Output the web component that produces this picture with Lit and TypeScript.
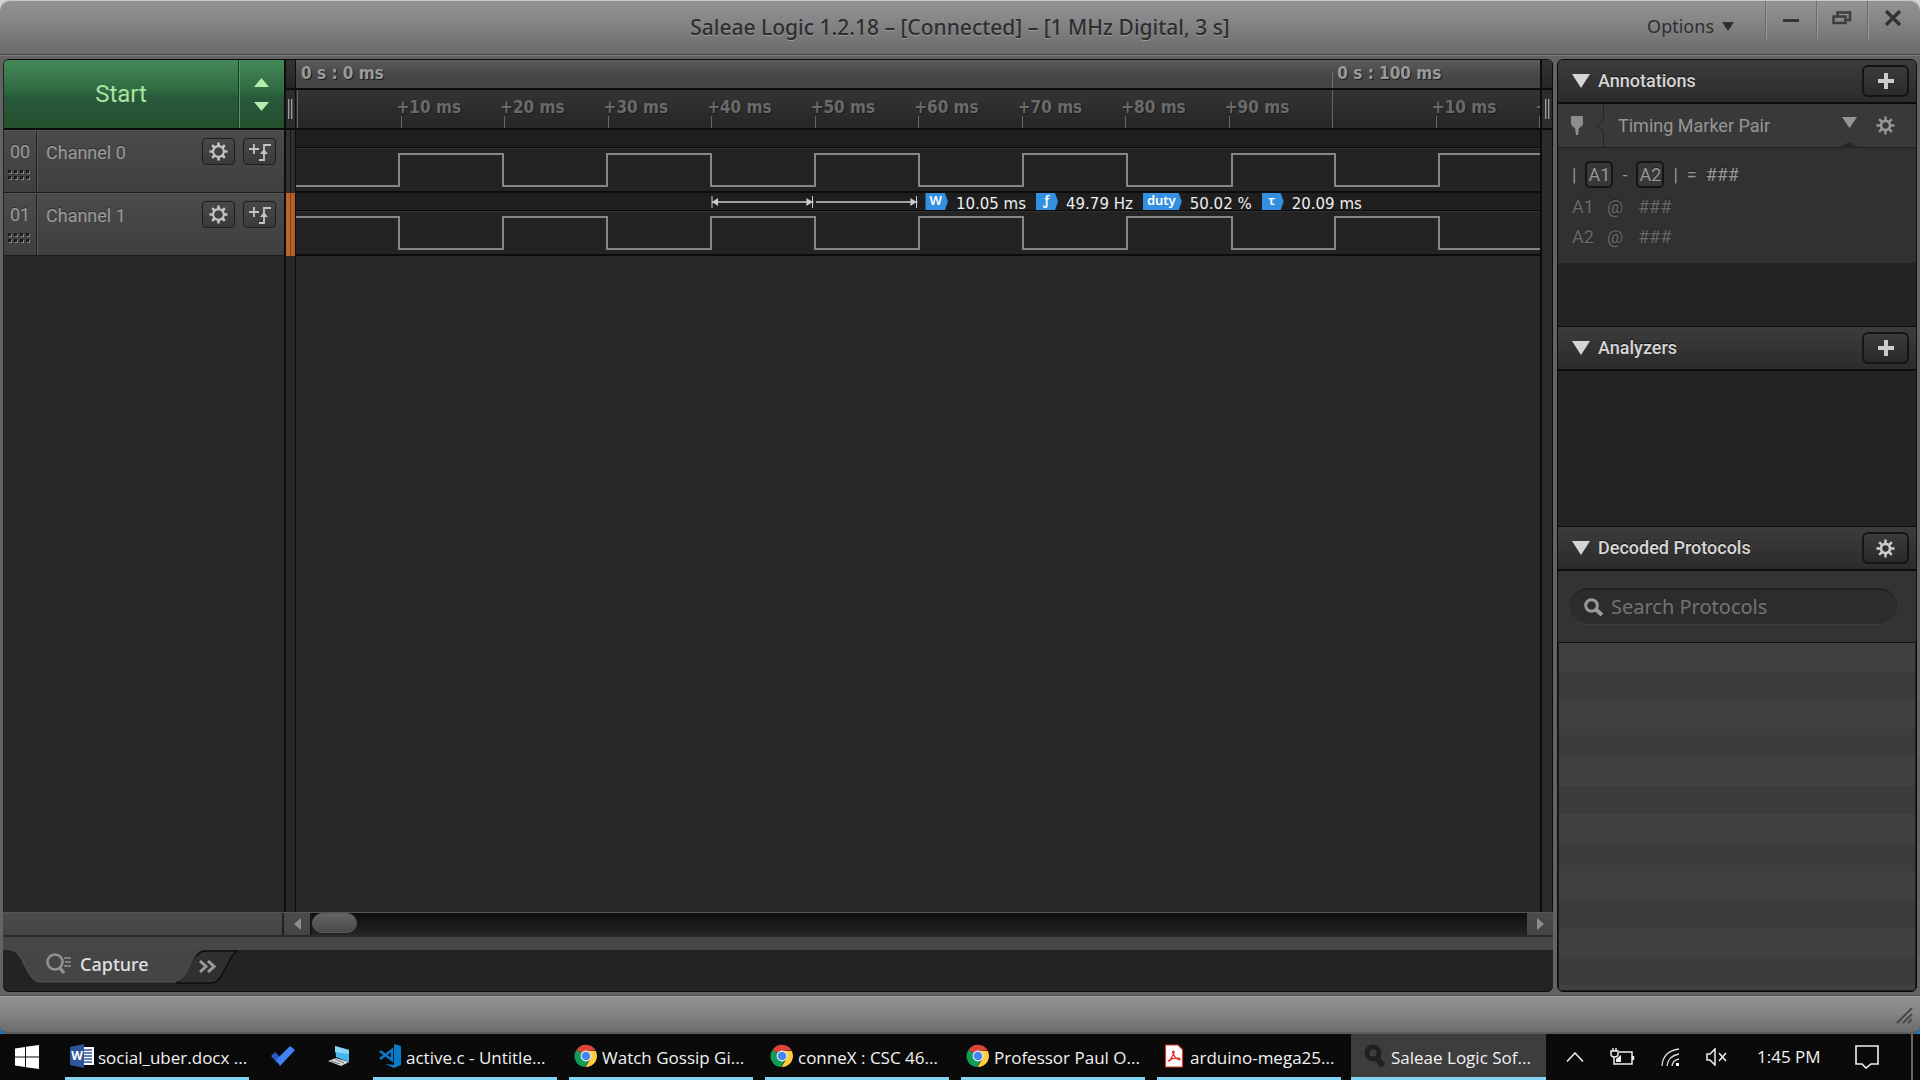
import { LitElement, html, svg, css } from "lit";
import { customElement } from "lit/decorators.js";
import { classMap } from "lit/directives/class-map.js";

const MINOR_TICKS = ["", "+10 ms", "+20 ms", "+30 ms", "+40 ms", "+50 ms", "+60 ms", "+70 ms", "+80 ms", "+90 ms", "", "+10 ms", "+20 ms"];

/* Edge positions on a 1244-unit wide time axis. */
const EDGES = [103, 207, 311, 415, 519, 623, 727, 831, 936, 1039, 1143];
const PLOT_WIDTH = 1244;
const HIGH = 6;
const LOW = 39;

function wavePath(startHigh: boolean): string {
  let high = startHigh;
  let d = `M0 ${high ? HIGH : LOW}`;
  for (const x of EDGES) {
    high = !high;
    d += `H${x}V${high ? HIGH : LOW}`;
  }
  return d + `H${PLOT_WIDTH}`;
}

function gearPath(teeth: number, outer: number, inner: number): string {
  const points: string[] = [];
  const step = (Math.PI * 2) / teeth;
  for (let i = 0; i < teeth; i++) {
    const a = i * step - Math.PI / 2;
    for (const [r, off] of [[inner, -0.27], [outer, -0.17], [outer, 0.17], [inner, 0.27]]) {
      const t = a + off * step;
      points.push(`${(12 + r * Math.cos(t)).toFixed(2)} ${(12 + r * Math.sin(t)).toFixed(2)}`);
    }
  }
  return "M" + points.join("L") + "Z";
}

const gear = (size: number, hole: number) => html`<svg class="icon" width=${size} height=${size} viewBox="0 0 24 24" aria-hidden="true">
  <path fill="currentColor" fill-rule="evenodd" d="${gearPath(8, 11.5, hole > 5 ? 8.2 : 7.4)}M${12 - hole} 12a${hole} ${hole} 0 1 0 ${hole * 2} 0a${hole} ${hole} 0 1 0 ${-hole * 2} 0Z" />
</svg>`;

const plus = html`<svg class="icon" width="18" height="18" viewBox="0 0 18 18" aria-hidden="true"><path fill="currentColor" d="M7 1h4v6h6v4h-6v6H7v-6H1V7h6z" /></svg>`;

const triggerIcon = html`<svg class="icon" width="24" height="20" viewBox="0 0 24 20" fill="none" stroke="currentColor" stroke-width="1.800" aria-hidden="true">
  <path d="M1 7h10M6 2v10" /><path d="M11 18h5V3h7" /><path d="M12 12l4-5 4 5z" fill="currentColor" stroke="none" />
</svg>`;

const grip = html`<svg class="grip" width="24" height="12" viewBox="0 0 24 12" aria-hidden="true">
  ${[0, 6, 12, 18].map((x) => [0, 6].map((y) => svg`<path d="M${x} ${y}h3v3h-3z" fill="#1b1b1b"/><path d="M${x + 3} ${y + 1}h1v3h-3v-1h2z" fill="#858585"/>`))}
</svg>`;

const chrome = html`<svg width="24" height="24" viewBox="0 0 24 24" aria-hidden="true">
  <path d="M12 12 2.500 6A11 11 0 0 1 21.600 6.600L12 7z" fill="#db4437" />
  <path d="M12 12 2.400 5.900A11 11 0 0 0 11 23l5-8.500z" fill="#0f9d58" />
  <path d="M12 7h9.800A11 11 0 0 1 11.500 23l5-8.500z" fill="#ffcd40" />
  <circle cx="12" cy="12" r="5.400" fill="#f1f1f1" /><circle cx="12" cy="12" r="4.300" fill="#4285f4" />
</svg>`;

const wordIcon = html`<svg width="24" height="24" viewBox="0 0 24 24" aria-hidden="true">
  <path d="M12 3h12v18H12z" fill="#fff" />
  <path d="M14 6h8M14 9h8M14 12h8M14 15h8M14 18h8" stroke="#2b579a" stroke-width="1.500" />
  <path d="M0 3 14 0v24L0 21z" fill="#2b579a" />
  <text x="7" y="16" text-anchor="middle" font-family="Open Sans, sans-serif" font-size="12" font-weight="700" fill="#fff">W</text>
</svg>`;

const codeIcon = html`<svg width="24" height="24" viewBox="0 0 24 24" aria-hidden="true">
  <path d="M16 0l7 2v19l-7 3-9-4 9 1z" fill="#0a7bc8" />
  <path d="M2 7l12 9V6L2 15" fill="none" stroke="#0a7bc8" stroke-width="2.400" />
</svg>`;

const pdfIcon = html`<svg width="24" height="24" viewBox="0 0 24 24" aria-hidden="true">
  <path d="M3.500 1H16l4.500 4.500V23h-17z" fill="#fff" stroke="#d9372c" stroke-width="1.200" />
  <path d="M11.500 7c-2 0 0 4 2 6.500s5 3 4.500 1.500-7-1-10 .8-1.500 2 0 .2S13.500 7 11.500 7z" fill="none" stroke="#e2261c" stroke-width="1.200" />
</svg>`;

const saleaeIcon = html`<svg width="24" height="24" viewBox="0 0 24 24" aria-hidden="true">
  <circle cx="10" cy="9" r="6" fill="none" stroke="#221f20" stroke-width="5" /><path d="M13 13l7 9" stroke="#221f20" stroke-width="6" />
</svg>`;

interface Task { label: string; icon: unknown; active?: boolean }

@customElement("app-root")
export class AppRoot extends LitElement {
  static styles = css`
    :host { display: flex; flex-direction: column; min-height: 100vh; background: #0a0a0a; color: #aaa; font-family: Roboto, sans-serif; font-size: 18px; line-height: 20px; }
    * { box-sizing: border-box; }
    svg { display: block; flex: none; }
    button { font: inherit; color: inherit; background: none; border: 0; padding: 0; margin: 0; display: flex; align-items: center; justify-content: center; }
    h1, h2, p { margin: 0; font-size: inherit; font-weight: inherit; }

    .window { flex: 1; display: flex; flex-direction: column; background: #636363; border-radius: 10px 10px 0 0; }
    .top { background: #d4d6d6; }

    .titlebar { display: grid; grid-template-columns: 1fr auto 1fr; height: 55px; border-top: 1px solid #c8caca; border-bottom: 1px solid #484848; border-radius: 10px 10px 0 0; background: linear-gradient(#939395, #858587 40%, #6a6a6a); font-family: "Noto Sans", sans-serif; color: #2e2e2e; text-shadow: 0 1px 0 #9a9a9a; }
    .title { grid-column: 2; padding-top: 12px; font-size: 21px; line-height: 28px; font-weight: 500; }
    .tools { display: flex; justify-content: flex-end; align-items: flex-start; padding-right: 2px; }
    .options { gap: 8px; margin: 12px 31px 0 0; font-size: 18px; line-height: 26px; }
    .winbtn { width: 51px; height: 38px; border-left: 1px solid #6c6c6c; box-shadow: inset 1px 0 0 #9a9a9a; padding-bottom: 4px; }

    .body { flex: 1; display: flex; gap: 4px; padding: 3px 3px 4px 3px; border-top: 1px solid #7c7c7c; }
    .panel { border: 1px solid #0c0c0c; border-radius: 6px; overflow: hidden; display: flex; flex-direction: column; }
    .main { flex: 1; min-width: 0; border-width: 1px 0; background: #232323; }
    .side { width: 360px; background: #232323; }

    .scope { flex: 1; display: flex; background: #282828; }
    .channels { width: 281px; flex: none; border-left: 1px solid #222; }
    .start { display: flex; height: 70px; border-bottom: 2px solid #0d0d0d; background: linear-gradient(#45895a, #2f6a40 45%, #28593a 55%, #25502f); color: #a9e3a0; }
    .startbtn { flex: 1; font-size: 24px; line-height: 28px; border-right: 1px solid #1c3c26; box-shadow: 1px 0 0 #549866; }
    .stepper { width: 45px; flex-direction: column; gap: 15px; }
    .channel { display: flex; height: 63px; border-bottom: 1px solid #1c1c1c; border-top: 1px solid #555; background: linear-gradient(#4b4b4b, #3f3f3f); color: #9c9c9c; text-shadow: 0 -1px 0 #2c2c2c; }
    .num { width: 33px; display: flex; flex-direction: column; align-items: center; gap: 8px; padding-top: 11px; border-right: 1px solid #222; }
    .name { flex: 1; padding: 12px 0 0 8px; border-left: 1px solid #555; }
    .chbtns { display: flex; gap: 8px; padding: 7px 8px 0 0; }
    .chbtn { width: 33px; height: 27px; border: 1px solid #1f1f1f; border-radius: 4px; background: linear-gradient(#484848, #3a3a3a); color: #c4c4c4; box-shadow: 0 0 0 1px #444; }

    .gutter { width: 12px; flex: none; border: solid #0c0c0c; border-width: 0 1px 0 2px; background: #282828; }
    .gutter.end { width: 13px; background: #2b2b2b; }
    .gtop { height: 30px; border-bottom: 2px solid #0c0c0c; background: linear-gradient(#333, #262626); }
    .gmid { height: 40px; border-bottom: 2px solid #0c0c0c; display: flex; justify-content: center; align-items: center; gap: 1px; background: #2c2c2c; }
    .gbar { width: 2px; height: 20px; background: #9a9a9a; border-right: 1px solid #555; }
    .gch { height: 63px; background: linear-gradient(90deg, #333 40%, #181818 40% 60%, #303030 60%); }
    .gch.hot { background: linear-gradient(90deg, #b8662c 45%, #8b4310 45% 55%, #b06024 55%); }

    .plot { flex: 1; min-width: 0; overflow: hidden; }
    .ruler { font-family: "DejaVu Sans Condensed", "DejaVu Sans", sans-serif; font-size: 17px; font-weight: 700; white-space: nowrap; text-shadow: 1px 1px 0 #1c1c1c; }
    .major { display: flex; height: 30px; border-bottom: 2px solid #0c0c0c; background: linear-gradient(#5c5c5c, #474747 55%, #434343); color: #9a9a9a; }
    .majorcell { flex: 0 0 83.3%; padding: 3px 0 0 5px; }
    .majorcell.tick { flex: 0 0 16.7%; background: linear-gradient(#707070, #707070) 0 100% / 1px 16px no-repeat; }
    .minor { display: flex; height: 40px; padding-left: 1px; border-bottom: 2px solid #0c0c0c; background: linear-gradient(#343434, #262626); color: #6a6a6a; }
    .minorcell { flex: 0 0 8.33%; padding-top: 7px; background: linear-gradient(#666, #666) 0 100% / 1px 12px no-repeat; }
    .minorcell.long { background-size: 1px 40px; }
    .mlabel { margin-left: -4px; }
    .row { height: 63px; border-bottom: 2px solid #0c0c0c; background: #232323; }
    .strip { height: 18px; display: flex; align-items: center; border-bottom: 1px solid #0c0c0c; background: #1e1e1e; color: #eee; font-family: "DejaVu Sans", sans-serif; font-size: 15px; line-height: 18px; white-space: nowrap; }
    .lead { flex: 0 0 33.4%; }
    .span { flex: 0 0 8.32%; }
    .metrics { display: flex; gap: 10px; padding-left: 7px; }
    .metric { display: flex; gap: 8px; align-items: center; }
    .tag { min-width: 22px; height: 17px; padding: 0 6px 0 4px; text-align: center; background: #3390e0; clip-path: polygon(0 0, calc(100% - 3px) 0, 100% 50%, calc(100% - 3px) 100%, 0 100%); color: #fff; font: 600 13px/15px "Noto Sans", sans-serif; }
    .value { padding-top: 4px; }
    .wave { width: 100%; height: 43px; border-top: 1px solid #303030; }

    .scroll { display: flex; height: 25px; border-top: 1px solid #565656; border-bottom: 2px solid #2a2a2a; background: linear-gradient(#4b4b4b, #444); }
    .scrollpad { width: 281px; border-right: 2px solid #222; }
    .arrow { width: 26px; color: #8e8e8e; }
    .track { flex: 1; border-left: 2px solid #171717; background: linear-gradient(#0e0e0e, #242424); }
    .thumb { width: 45px; height: 20px; border-radius: 10px; background: linear-gradient(#646464, #484848); border: 1px solid #5c5c5c; }
    .tabs { height: 54px; border-top: 13px solid #474747; display: flex; background: #232323; }
    .tab { position: relative; display: flex; width: 239px; height: 35px; }
    .tabshape { position: absolute; left: 0; top: 0; }
    .capture { position: relative; gap: 9px; margin-left: 43px; height: 28px; font-family: "Noto Sans", sans-serif; font-weight: 500; color: #e0e0e0; }
    .more { position: relative; margin-left: 50px; height: 32px; color: #999; }

    .shead { display: flex; align-items: center; height: 45px; padding: 0 7px 0 14px; gap: 8px; border: solid #0c0c0c; border-width: 1px 0 2px; background: linear-gradient(#3c3c3c, #2b2b2b); color: #d6d6d6; font-weight: 500; }
    .shead.first { border-top: 0; height: 44px; }
    .shead h2 { flex: 1; text-shadow: 0 -1px 0 #111; }
    .sbtn { width: 47px; height: 32px; border: 2px solid #151515; border-radius: 6px; background: linear-gradient(#3b3b3b, #2a2a2a); color: #ccc; }
    .marker { display: flex; align-items: center; height: 44px; padding: 0 21px 0 13px; background: #393939; border-bottom: 1px solid #222; color: #969696; }
    .marker p { flex: 1; padding-left: 14px; }
    .marker .notch { margin-left: 13px; }
    .dd { position: relative; height: 44px; width: 26px; padding-bottom: 6px; }
    .ddnotch { position: absolute; left: 0; bottom: 0; }
    .mgear { margin-left: 14px; }
    .mbody { height: 115px; padding: 13px 0 0 14px; background: #313131; display: flex; flex-direction: column; gap: 7px; color: #686868; text-shadow: 0 -1px 0 #222; }
    .eq { display: flex; align-items: center; height: 27px; gap: 9px; color: #999; }
    .mark { width: 28px; height: 27px; border: 2px solid #151515; border-radius: 5px; background: #383838; text-align: center; line-height: 23px; }
    .pos { display: grid; grid-template-columns: 35px 31px 1fr; height: 23px; align-items: center; }
    .gap1 { height: 63px; }
    .gap2 { height: 155px; }
    .searchbar { height: 72px; padding: 17px 19px 17px 12px; background: #333; border-bottom: 1px solid #111; }
    .search { display: flex; align-items: center; gap: 7px; height: 37px; padding: 0 14px; border-radius: 18px; background: #2c2c2c; border-top: 2px solid #222; border-bottom: 1px solid #3c3c3c; color: #9a9a9a; }
    .search input { flex: 1; min-width: 0; border: 0; padding: 0; outline: 0; background: none; color: #ddd; font: 20px/26px "Noto Sans", sans-serif; }
    .search input::placeholder { color: #747474; opacity: 1; }
    .list { flex: 1; border: 1px solid #1c1c1c; border-top: 0; background: repeating-linear-gradient(#414141 0 29px, #3c3c3c 29px 57px); }

    .status { height: 38px; display: flex; justify-content: flex-end; align-items: flex-end; padding: 0 7px 8px; border-top: 1px solid #a0a0a2; border-bottom: 2px solid #5c5c5c; border-radius: 0 0 8px 8px; background: linear-gradient(#919193, #868688 40%, #6c6c6c); box-shadow: 0 -1px 0 #4c4c4c; }
    .under { background: #2175b5; }

    .taskbar { display: flex; height: 46px; background: #0a0a0a; color: #f2f2f2; font-family: "Open Sans", "Noto Sans", sans-serif; font-size: 17px; line-height: 22px; white-space: nowrap; }
    .tb { height: 46px; flex: none; }
    .winlogo { width: 65px; padding-right: 11px; padding-bottom: 1px; }
    .task { width: 184px; justify-content: flex-start; gap: 4px; margin-right: 12px; padding: 4px 0 0 5px; border-bottom: 3px solid #83d3f2; }
    .task.active { width: 195px; margin: 0 0 0 -2px; padding-left: 12px; background: #3d3d3d; }
    .task svg { margin-bottom: 4px; }
    .pin { width: 56px; padding-bottom: 2px; }
    .pins { display: flex; flex: none; margin-left: -6px; margin-right: 6px; }
    .tray { flex: 1; display: flex; align-items: center; padding: 0 7px 0 20px; }
    .tray svg { flex: none; margin-right: 26px; }
    .clock { margin-left: 4px; margin-right: 34px; }
    .peek { margin-left: auto; height: 46px; border-left: 2px solid #6a6a6a; }
  `;

  private tasks: Task[] = [
    { label: "social_uber.docx ...", icon: wordIcon },
    { label: "active.c - Untitle...", icon: codeIcon },
    { label: "Watch Gossip Gi...", icon: chrome },
    { label: "conneX : CSC 46...", icon: chrome },
    { label: "Professor Paul O...", icon: chrome },
    { label: "arduino-mega25...", icon: pdfIcon },
    { label: "Saleae Logic Sof...", icon: saleaeIcon, active: true },
  ];

  private metrics = [
    ["W", "10.05 ms"],
    ["ƒ", "49.79 Hz"],
    ["duty", "50.02 %"],
    ["τ", "20.09 ms"],
  ];

  private down(w: number, h: number) {
    return html`<svg width=${w} height=${h} viewBox="0 0 10 10" preserveAspectRatio="none" aria-hidden="true"><path d="M0 0h10L5 10z" fill="currentColor" /></svg>`;
  }

  private titlebar() {
    return html`<header class="titlebar">
      <h1 class="title">Saleae Logic 1.2.18 – [Connected] – [1 MHz Digital, 3 s]</h1>
      <div class="tools">
        <button class="options">Options ${this.down(12, 9)}</button>
        <button class="winbtn" aria-label="Minimize"><svg width="16" height="16"><path d="M0 9h16v3H0z" fill="#333" /></svg></button>
        <button class="winbtn" aria-label="Restore"><svg width="20" height="14" viewBox="0 0 20 14" fill="none" stroke="#3c3c3c" stroke-width="2.500"><path d="M5.500 5V1.500h12.500V9H15" /><path d="M1.500 5.500h12v6.500h-12z" /></svg></button>
        <button class="winbtn" aria-label="Close"><svg width="16" height="16"><path d="M1 1l14 14M15 1L1 15" stroke="#333" stroke-width="3.500" /></svg></button>
      </div>
    </header>`;
  }

  private channel(i: number) {
    return html`<div class="channel">
      <div class="num">0${i}${grip}</div>
      <div class="name">Channel ${i}</div>
      <div class="chbtns">
        <button class="chbtn" aria-label="Channel ${i} settings">${gear(19, 5.5)}</button>
        <button class="chbtn" aria-label="Channel ${i} trigger">${triggerIcon}</button>
      </div>
    </div>`;
  }

  private wave(startHigh: boolean) {
    return html`<svg class="wave" viewBox="0 0 ${PLOT_WIDTH} 43" preserveAspectRatio="none" aria-hidden="true">
      <path d=${wavePath(startHigh)} transform="translate(0 -1)" fill="none" stroke="#868686" stroke-width="2" vector-effect="non-scaling-stroke" shape-rendering="crispEdges" />
    </svg>`;
  }

  private spanArrow(both: boolean) {
    return html`<svg class="span" height="14" viewBox="0 0 103 14" preserveAspectRatio="none" stroke="#ccc" fill="#ccc" aria-hidden="true">
      <path d="M1 7h101" stroke-width="1.500" /><path d="M101 1v12" />
      <path d="M101 7l-6-4v8z" stroke="none" />
      ${both ? svg`<path d="M1 1v12"/><path d="M1 7l6-4v8z" stroke="none"/>` : ""}
    </svg>`;
  }

  private gutter(end: boolean) {
    return html`<div class=${classMap({ gutter: true, end })}>
      <div class="gtop"></div>
      <div class="gmid"><div class="gbar"></div><div class="gbar"></div></div>
      ${end ? "" : html`<div class="gch"></div><div class="gch hot"></div>`}
    </div>`;
  }

  private scope() {
    return html`<section class="scope">
      <div class="channels">
        <div class="start">
          <button class="startbtn">Start</button>
          <button class="stepper" aria-label="Capture settings">
            <svg width="15" height="9"><path d="M0 9 7.500 0 15 9z" fill="#b5ecae" /></svg>
            <svg width="15" height="9"><path d="M0 0h15L7.500 9z" fill="#b5ecae" /></svg>
          </button>
        </div>
        ${this.channel(0)}${this.channel(1)}
      </div>
      ${this.gutter(false)}
      <div class="plot">
        <div class="ruler">
          <div class="major"><div class="majorcell">0 s : 0 ms</div><div class="majorcell tick">0 s : 100 ms</div></div>
          <div class="minor">${MINOR_TICKS.map((t) => html`<div class=${classMap({ minorcell: true, long: !t })}><div class="mlabel">${t}</div></div>`)}</div>
        </div>
        <div class="row"><div class="strip"></div>${this.wave(false)}</div>
        <div class="row">
          <div class="strip">
            <div class="lead"></div>${this.spanArrow(true)}${this.spanArrow(false)}
            <div class="metrics">
              ${this.metrics.map(([k, v]) => html`<div class="metric"><span class="tag">${k}</span><span class="value">${v}</span></div>`)}
            </div>
          </div>
          ${this.wave(true)}
        </div>
      </div>
      ${this.gutter(true)}
    </section>`;
  }

  private bottom() {
    return html`<div class="scroll">
        <div class="scrollpad"></div>
        <button class="arrow" aria-label="Scroll left"><svg width="7" height="12"><path d="M7 0v12L0 6z" fill="currentColor" /></svg></button>
        <div class="track"><div class="thumb"></div></div>
        <button class="arrow" aria-label="Scroll right"><svg width="7" height="12"><path d="M0 0v12l7-6z" fill="currentColor" /></svg></button>
      </div>
      <div class="tabs">
        <div class="tab">
          <svg class="tabshape" width="240" height="36" viewBox="0 0 240 36" aria-hidden="true">
            <path d="M173 33C185 28 187 1 204 1H234C223 8 221 33 208 33Z" fill="#303030" stroke="#0e0e0e" stroke-width="1.500" />
            <path d="M7 0C21 0 23 32 37 32H173C187 30 189 0 201 0Z" fill="#454545" />
            <path d="M7 0C21 0 23 32 37 32H173" fill="none" stroke="#575757" />
          </svg>
          <button class="capture">
            <svg width="25" height="22" viewBox="0 0 25 22" fill="none" stroke="#929292"><circle cx="9" cy="9" r="7.500" stroke-width="2.500" /><path d="M13 14l5 6" stroke-width="3.500" /><path d="M18 5h7M19 9h6M18 13h7" stroke-width="1.500" /></svg>
            Capture
          </button>
          <button class="more" aria-label="More tabs"><svg width="17" height="13" viewBox="0 0 17 13" fill="none" stroke="currentColor" stroke-width="3"><path d="M1 1l6 5.500L1 12M9 1l6 5.500L9 12" /></svg></button>
        </div>
      </div>`;
  }

  private head(title: string, icon: unknown, label: string, first = false) {
    return html`<div class=${classMap({ shead: true, first })}>${this.down(18, 14)}<h2>${title}</h2><button class="sbtn" aria-label=${label}>${icon}</button></div>`;
  }

  private side() {
    return html`<aside class="panel side">
      ${this.head("Annotations", plus, "Add annotation", true)}
      <div class="marker">
        <svg width="12" height="19" viewBox="0 0 12 19" aria-hidden="true"><path d="M0 1q0-1 1-1h10q1 0 1 1v6q0 3-4 5l-1 7H5l-1-7Q0 10 0 7z" fill="#8d8d8d" /></svg>
        <svg class="notch" width="8" height="43" viewBox="0 0 8 43" aria-hidden="true"><path d="M7.500 0v14Q7 16 1 21.500 7 27 7.500 29v14" fill="none" stroke="#242424" /></svg>
        <p>Timing Marker Pair</p>
        <button class="dd" aria-label="Show details">${this.down(15, 11)}
          <svg class="ddnotch" width="26" height="6" viewBox="0 0 26 6" aria-hidden="true"><path d="M1 6Q5 5 13 0 21 5 25 6z" fill="#262626" /></svg></button>
        <button class="mgear" aria-label="Marker settings">${gear(19, 4)}</button>
      </div>
      <div class="mbody">
        <div class="eq"><span>|</span><span class="mark">A1</span><span>-</span><span class="mark">A2</span><span>|</span><span>=</span><span>###</span></div>
        <div class="pos"><span>A1</span><span>@</span><span>###</span></div>
        <div class="pos"><span>A2</span><span>@</span><span>###</span></div>
      </div>
      <div class="gap1"></div>
      ${this.head("Analyzers", plus, "Add analyzer")}
      <div class="gap2"></div>
      ${this.head("Decoded Protocols", gear(19, 4), "Protocol settings")}
      <div class="searchbar">
        <div class="search">
          <label for="protocols" aria-label="Search Protocols"><svg width="20" height="19" viewBox="0 0 20 19" fill="none" stroke="currentColor" stroke-width="3"><circle cx="7.500" cy="7.500" r="5.800" /><path d="M12 11.500l6 5.500" stroke-width="4" /></svg></label>
          <input id="protocols" type="text" placeholder="Search Protocols" />
        </div>
      </div>
      <div class="list"></div>
    </aside>`;
  }

  private task(t: Task) {
    return html`<button class=${classMap({ tb: true, task: true, active: !!t.active })}>${t.icon}<span>${t.label}</span></button>`;
  }

  private taskbar() {
    return html`<nav class="taskbar" aria-label="Taskbar">
      <button class="tb winlogo" aria-label="Start menu"><svg width="24" height="24" viewBox="0 0 24 24" fill="#fff"><path d="M0 3.400 10 2v9.500H0zM11 1.800 24 0v11.500H11zM0 12.500h10V22L0 20.600zM11 12.500h13V24l-13-1.800z" /></svg></button>
      ${this.task(this.tasks[0])}
      <div class="pins">
        <button class="tb pin" aria-label="To Do"><svg width="24" height="20" viewBox="0 0 24 20"><path d="M0 10l4-4 6 6-4 5z" fill="#2a56c6" /><path d="M5 14 19 0l5 4L9 20z" fill="#3f83f5" /></svg></button>
        <button class="tb pin" aria-label="Remote session"><svg width="22" height="20" viewBox="0 0 22 20"><path d="M7 0l14 4v12L8 11z" fill="#45b5ee" /><path d="M7 0l14 4v4L7 6z" fill="#8ad4f7" /><path d="M0 15l8-3 13 4-8 4z" fill="#d3d7da" /><path d="M3 15l9 3M7 13l9 4" stroke="#6d7377" /></svg></button>
      </div>
      ${this.tasks.slice(1).map((t) => this.task(t))}
      <div class="tray">
        <svg width="18" height="10" fill="none" stroke="#f0f0f0" stroke-width="1.500"><path d="M1 9.500 9 1l8 8.500" /></svg>
        <svg width="25" height="18" viewBox="0 0 25 18" fill="none" stroke="#f0f0f0" stroke-width="1.500"><path d="M9 4h13v12H4V9M23.500 8v4" /><path d="M1 3h7v3q0 3-3.500 3T1 6zM3 0v3M6 0v3" /><path d="M6 11l5-4v7H6z" fill="#f0f0f0" stroke="none" /></svg>
        <svg width="19" height="19" viewBox="0 0 19 19" fill="none" stroke="#d8d8d8" stroke-width="1.300"><path d="M1 18Q2 3 18 1M6 18Q7 8 18 6M11 18Q12 12 18 11" /><path d="M15 15h3v3h-3z" fill="#fff" stroke="none" /></svg>
        <svg width="21" height="18" viewBox="0 0 21 18" fill="none" stroke="#f0f0f0" stroke-width="1.500"><path d="M1 6h3l5-5v16l-5-5H1zM13 5l7 8M20 5l-7 8" /></svg>
        <span class="clock">1:45 PM</span>
        <svg width="24" height="24" viewBox="0 0 24 24" fill="none" stroke="#f0f0f0" stroke-width="1.600"><path d="M1 1h22v18h-7l-5 4-4-4H1z" /></svg>
        <div class="peek"></div>
      </div>
    </nav>`;
  }

  render() {
    return html`<div class="window">
        <div class="top">${this.titlebar()}</div>
        <main class="body">
          <div class="panel main">${this.scope()}${this.bottom()}</div>
          ${this.side()}
        </main>
        <div class="under"><footer class="status">
          <svg width="17" height="16" viewBox="0 0 17 16" stroke="#444" stroke-width="1.800"><path d="M1 15 16 0M7 15l9-9M12 15l4-4" /></svg>
        </footer></div>
      </div>
      ${this.taskbar()}`;
  }
}
